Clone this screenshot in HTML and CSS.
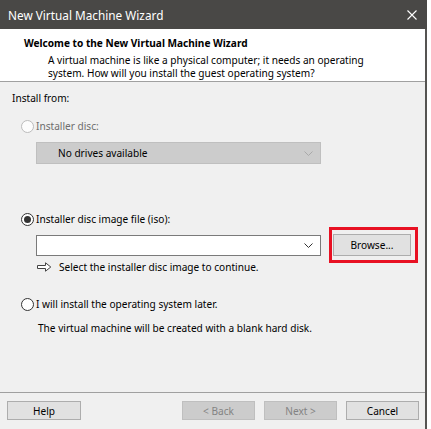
FILE: index.html
```html
<!DOCTYPE html>
<html>
<head>
<meta charset="utf-8">
<link rel="stylesheet" href="styles.css">
</head>
<body>
<div class="window">
  <div class="titlebar">
    <span class="title">New Virtual Machine Wizard</span>
    <svg class="close" width="10" height="10" viewBox="0 0 10 10"><path d="M0.5 0.5L9.5 9.5M9.5 0.5L0.5 9.5" stroke="#fff" stroke-width="1.1" fill="none"/></svg>
  </div>
  <div class="header">
    <div class="h-title">Welcome to the New Virtual Machine Wizard</div>
    <div class="h-desc">A virtual machine is like a physical computer; it needs an operating<br>system. How will you install the guest operating system?</div>
  </div>
  <div class="content">
    <div class="label">Install from:</div>
    <div class="radio-row r1 disabled"><span class="radio"></span><span>Installer disc:</span></div>
    <div class="combo disabled"><span class="combo-text">No drives available</span><svg class="chev" width="9" height="5" viewBox="0 0 9 5"><path d="M0.5 0.5L4.5 4.5L8.5 0.5" stroke="#a9a9a9" fill="none"/></svg></div>
    <div class="radio-row r2"><span class="radio checked"></span><span>Installer disc image file (iso):</span></div>
    <div class="iso-row">
      <div class="combo iso"><span class="combo-text"></span><svg class="chev" width="9" height="5" viewBox="0 0 9 5"><path d="M0.5 0.5L4.5 4.5L8.5 0.5" stroke="#333" fill="none"/></svg></div>
      <div class="browse-wrap">
        <button class="btn browse">Browse...</button>
        <span class="highlight"></span>
      </div>
    </div>
    <div class="hint">
      <svg class="arrow" width="15" height="10" viewBox="0 0 15 10"><path d="M0.5 3.5H8.5V0.8L13.8 5L8.5 9.2V6.5H0.5Z" fill="#fff" stroke="#444" stroke-width="1"/></svg>
      <span>Select the installer disc image to continue.</span>
    </div>
    <div class="radio-row r3"><span class="radio"></span><span>I will install the operating system later.</span></div>
    <div class="note">The virtual machine will be created with a blank hard disk.</div>
  </div>
  <div class="footer">
    <button class="btn help">Help</button>
    <div class="spacer"></div>
    <button class="btn off">&lt; Back</button>
    <button class="btn off">Next &gt;</button>
    <button class="btn">Cancel</button>
  </div>
</div>
</body>
</html>
```
FILE: styles.css
```css
* { box-sizing: border-box; }
html, body { margin: 0; padding: 0; background: #fff; }
body {
  font-family: "Noto Sans", "Open Sans", sans-serif;
  font-size: 10.1px;
  color: #000;
  width: 431px;
  height: 429px;
  overflow: hidden;
}
.window {
  width: 427px;
  height: 429px;
  border-right: 2px solid #555452;
  background: #f0f0f0;
  display: flex;
  flex-direction: column;
}
.titlebar {
  height: 29px;
  flex: none;
  background: #494846;
  color: #fff;
  display: flex;
  align-items: center;
  padding-left: 8px;
  padding-right: 10px;
  margin-right: -2px;
}
.title { font-size: 11.8px; flex: 1; }
.close { display: block; }
.header {
  background: #fff;
  height: 53px;
  flex: none;
  padding-top: 7px;
  border-bottom: 1px solid #a0a0a0;
}
.h-title {
  font-weight: bold;
  padding-left: 24px;
  line-height: 14px;
}
.h-desc {
  padding-left: 48px;
  margin-top: 4px;
  line-height: 13px;
}
.content {
  height: 310px;
  flex: none;
  padding-top: 9px;
}
.label { padding-left: 12px; line-height: 14px; }
.radio-row {
  display: flex;
  align-items: center;
  gap: 2px;
  padding-left: 21px;
  line-height: 14px;
}
.r1 { margin-top: 14px; }
.r2 { margin-top: 48px; }
.r3 { margin-top: 23px; }
.radio {
  width: 13px;
  height: 13px;
  border-radius: 50%;
  border: 1px solid #333;
  background: #fff;
  flex: none;
  display: flex;
  align-items: center;
  justify-content: center;
}
.radio.checked::after {
  content: "";
  width: 7px;
  height: 7px;
  border-radius: 50%;
  background: #333;
}
.disabled { color: #6d6d6d; }
.disabled .radio { border-color: #bcbcbc; background: #fcfcfc; }
.combo {
  display: flex;
  align-items: center;
  height: 22px;
  width: 285px;
  margin-left: 36px;
  margin-top: 9px;
  border: 1px solid #bfbfbf;
  background: #cccccc;
  padding: 0 7px 0 21px;
}
.combo.disabled { color: #000; }
.combo-text { flex: 1; }
.chev { display: block; flex: none; }
.iso-row {
  display: flex;
  align-items: flex-start;
  margin-top: 9px;
  margin-left: 36px;
}
.combo.iso {
  margin: 0;
  height: 21px;
  background: #fff;
  border-color: #7a7a7a;
}
.browse-wrap {
  position: relative;
  margin-left: 12px;
  margin-top: -1px;
}
.btn {
  font-family: inherit;
  font-size: 10.1px;
  color: #000;
  background: #e1e1e1;
  border: 1px solid #adadad;
  height: 19px;
  width: 73px;
  padding: 0;
  margin: 0;
  display: flex;
  align-items: center;
  justify-content: center;
}
.btn.help { width: 74px; }
.browse { width: 78px; height: 22px; }
.highlight {
  position: absolute;
  left: -4px;
  top: -7px;
  right: -7px;
  bottom: -7px;
  border: 3px solid #e81123;
}
.hint {
  display: flex;
  align-items: center;
  gap: 7px;
  padding-left: 37px;
  margin-top: 4px;
  line-height: 14px;
}
.arrow { display: block; flex: none; }
.note {
  padding-left: 38px;
  margin-top: 10px;
  line-height: 14px;
}
.footer {
  flex: none;
  border-top: 1px solid #a0a0a0;
  display: flex;
  align-items: flex-start;
  padding: 8px 6px 0 7px;
  gap: 8px;
}
.spacer { flex: 1; }
.btn.off {
  background: #cccccc;
  border-color: #bfbfbf;
  color: #838383;
}
.btn.off + .btn { margin-left: 1px; }
```
